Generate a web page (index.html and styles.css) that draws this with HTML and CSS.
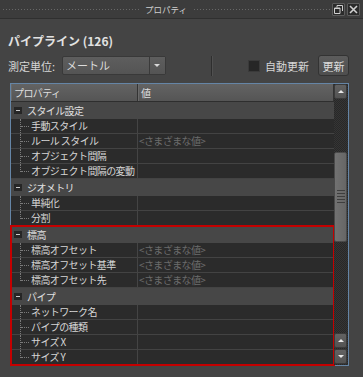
FILE: index.html
```html
<!DOCTYPE html>
<html lang="ja">
<head>
    <meta charset="UTF-8">
    <title>プロパティ</title>
    <link rel="stylesheet" href="styles.css">
</head>
<body>
    <div class="titlebar">
        <span class="grip"></span>
        <span class="title">プロパティ</span>
        <span class="grip"></span>
        <span class="tb-btn">
            <svg width="9" height="9" viewBox="0 0 9 9"><path d="M3 0.5h5.5v5.5M3 0.5v2M0.5 3h5.5v5.5h-5.5z M0.5 3.5h5.5" fill="none" stroke="#d0d0d0" stroke-width="1"/></svg>
        </span>
        <span class="tb-btn">
            <svg width="9" height="9" viewBox="0 0 9 9"><path d="M1 1L8 8M8 1L1 8" stroke="#d0d0d0" stroke-width="1.6"/></svg>
        </span>
    </div>

    <div class="panel">
        <h2 class="heading">パイプライン (126)</h2>

        <div class="toolbar">
            <span class="unit-label">測定単位:</span>
            <div class="select">
                <span class="select-value">メートル</span>
                <span class="select-arrow"></span>
            </div>
            <span class="divider"></span>
            <span class="checkbox"></span>
            <span class="check-label">自動更新</span>
            <button class="btn">更新</button>
        </div>

        <div class="grid">
            <div class="grid-body">
                <div class="grid-head">
                    <div class="cell">プロパティ</div>
                    <div class="cell">値</div>
                </div>

                <div class="row group"><span class="toggle"></span>スタイル設定</div>
                <div class="row"><div class="cell name"><span class="branch"></span>手動スタイル</div><div class="cell value"></div></div>
                <div class="row"><div class="cell name"><span class="branch"></span>ルール スタイル</div><div class="cell value">&lt;さまざまな値&gt;</div></div>
                <div class="row"><div class="cell name"><span class="branch"></span>オブジェクト間隔</div><div class="cell value"></div></div>
                <div class="row"><div class="cell name"><span class="branch last"></span>オブジェクト間隔の変動</div><div class="cell value"></div></div>

                <div class="row group"><span class="toggle"></span>ジオメトリ</div>
                <div class="row"><div class="cell name"><span class="branch"></span>単純化</div><div class="cell value"></div></div>
                <div class="row"><div class="cell name"><span class="branch last"></span>分割</div><div class="cell value"></div></div>

                <!-- 赤枠で囲まれた部分 -->
                <div class="highlight">
                    <div class="row group"><span class="toggle"></span>標高</div>
                    <div class="row"><div class="cell name"><span class="branch"></span>標高オフセット</div><div class="cell value">&lt;さまざまな値&gt;</div></div>
                    <div class="row"><div class="cell name"><span class="branch"></span>標高オフセット基準</div><div class="cell value">&lt;さまざまな値&gt;</div></div>
                    <div class="row"><div class="cell name"><span class="branch last"></span>標高オフセット先</div><div class="cell value">&lt;さまざまな値&gt;</div></div>

                    <div class="row group"><span class="toggle"></span>パイプ</div>
                    <div class="row"><div class="cell name"><span class="branch"></span>ネットワーク名</div><div class="cell value"></div></div>
                    <div class="row"><div class="cell name"><span class="branch"></span>パイプの種類</div><div class="cell value"></div></div>
                    <div class="row"><div class="cell name"><span class="branch"></span>サイズ X</div><div class="cell value"></div></div>
                    <div class="row"><div class="cell name"><span class="branch last"></span>サイズ Y</div><div class="cell value"></div></div>
                </div>
            </div>

            <div class="scrollbar">
                <span class="sb-btn up"></span>
                <span class="sb-track top"></span>
                <span class="sb-thumb"><span class="grip-dots"></span></span>
                <span class="sb-track rest"></span>
                <span class="sb-btn up"></span>
                <span class="sb-btn down"></span>
            </div>
        </div>
    </div>
</body>
</html>
```

FILE: styles.css
```css
body {
    margin: 0;
    width: 363px;
    height: 377px;
    background-color: #444;
    color: #d6d6d6;
    font-family: "Noto Sans CJK JP", "Noto Sans", sans-serif;
    overflow: hidden;
}
.titlebar {
    display: flex;
    align-items: center;
    height: 18px;
    padding: 0 3px 0 2px;
    background-color: #3c3c3c;
    border-bottom: 1px solid #2f2f2f;
}
.grip {
    flex: 1;
    height: 3px;
    background-image: radial-gradient(circle, #686868 0.7px, transparent 1px);
    background-size: 3px 3px;
}
.title {
    padding: 0 6px;
    font-size: 8.5px;
    line-height: 18px;
    color: #cfcfcf;
}
.tb-btn {
    display: flex;
    align-items: center;
    justify-content: center;
    width: 11px;
    height: 11px;
    margin-left: 2px;
    background-color: #2b2b2b;
    border: 1px solid #5c5c5c;
    border-radius: 1px;
}
.panel {
    padding: 14px 14px 0 8px;
}
.heading {
    margin: 0;
    font-size: 12px;
    font-weight: bold;
    line-height: 16px;
    color: #e2e2e2;
}
.toolbar {
    display: flex;
    align-items: center;
    height: 21px;
    margin-top: 6px;
    font-size: 11px;
}
.unit-label {
    width: 54px;
}
.select {
    display: flex;
    width: 102px;
    height: 17px;
    background: linear-gradient(#5e5e5e, #545454);
    border: 1px solid #393939;
    border-radius: 2px;
}
.select-value {
    flex: 1;
    padding-left: 3px;
    line-height: 17px;
    color: #dcdcdc;
}
.select-arrow {
    width: 15px;
    border-left: 1px solid #3a3a3a;
    background: linear-gradient(#5e5e5e, #545454);
    position: relative;
}
.select-arrow::after {
    content: "";
    position: absolute;
    left: 4px;
    top: 7px;
    border-left: 3px solid transparent;
    border-right: 3px solid transparent;
    border-top: 3px solid #d8d8d8;
}
.divider {
    width: 1px;
    height: 20px;
    margin: 0 35px 0 45px;
    background-color: #2e2e2e;
    border-right: 1px solid #505050;
}
.checkbox {
    width: 10px;
    height: 10px;
    background-color: #262626;
    border: 1px solid #3a3a3a;
}
.check-label {
    margin-left: 5px;
}
.btn {
    margin-left: auto;
    width: 31px;
    height: 21px;
    padding: 0;
    font-family: inherit;
    font-size: 11px;
    color: #dcdcdc;
    background: linear-gradient(#5c5c5c, #4e4e4e);
    border: 1px solid #333;
    border-radius: 3px;
}
.grid {
    display: flex;
    width: 337px;
    height: 281px;
    margin-top: 7px;
    margin-left: 2px;
    border: 1px solid #6585a6;
    background-color: #2c2c2c;
}
.grid-body {
    width: 323px;
    font-size: 10px;
    letter-spacing: -0.6px;
}
.grid-head {
    display: grid;
    grid-template-columns: 127px 1fr;
    height: 17px;
    background: linear-gradient(#636363, #555);
    border-bottom: 1px solid #2e2e2e;
    color: #dedede;
}
.grid-head .cell {
    padding-left: 2px;
    line-height: 17px;
    border-right: 1px solid #333;
    border-left: 1px solid #6a6a6a;
}
.row {
    display: grid;
    grid-template-columns: 127px 1fr;
    height: 14px;
    border-bottom: 1px solid #434343;
    background-color: #2b2b2b;
}
.row .cell {
    display: flex;
    align-items: center;
    line-height: 14px;
    white-space: nowrap;
    overflow: hidden;
}
.row .name {
    border-right: 1px solid #444;
}
.row .value {
    padding-left: 1px;
    color: #6c6c6c;
}
.row.group {
    display: flex;
    align-items: center;
    height: 17px;
    border-bottom: 0;
    background-color: #474747;
    color: #e0e0e0;
}
.toggle {
    position: relative;
    flex-shrink: 0;
    width: 8px;
    height: 7px;
    margin: 0 5px 0 3px;
    background-color: #262626;
}
.toggle::after {
    content: "";
    position: absolute;
    left: 2px;
    top: 3px;
    width: 4px;
    height: 1px;
    background-color: #c8c8c8;
}
.branch {
    position: relative;
    flex-shrink: 0;
    align-self: stretch;
    width: 9px;
    margin-left: 9px;
    margin-right: 1px;
    border-left: 1px dotted #7a7a7a;
}
.branch::after {
    content: "";
    position: absolute;
    left: 0;
    top: 7px;
    width: 8px;
    border-top: 1px dotted #7a7a7a;
}
.branch.last {
    align-self: flex-start;
    height: 8px;
}
.highlight {
    outline: 2px solid #c40000;
    outline-offset: -1px;
}
.scrollbar {
    display: flex;
    flex-direction: column;
    width: 14px;
    background-color: #2e2e2e;
    background-image: repeating-conic-gradient(#353535 0 25%, #282828 0 50%);
    background-size: 2px 2px;
}
.sb-btn {
    position: relative;
    height: 13px;
    margin: 0 1px 1px 0;
    background: linear-gradient(#626262, #535353);
    border: 1px solid #3a3a3a;
    border-radius: 2px;
}
.sb-btn::after {
    content: "";
    position: absolute;
    left: 3px;
    top: 5px;
    border-left: 3px solid transparent;
    border-right: 3px solid transparent;
}
.sb-btn.up::after {
    border-bottom: 3px solid #e8e8e8;
}
.sb-btn.down::after {
    border-top: 3px solid #e8e8e8;
}
.sb-track.top {
    height: 52px;
}
.sb-track.rest {
    flex: 1;
}
.sb-thumb {
    display: flex;
    align-items: center;
    justify-content: center;
    height: 88px;
    margin-right: 1px;
    background: linear-gradient(90deg, #727272, #666);
    border: 1px solid #4a4a4a;
    border-radius: 2px;
}
.grip-dots {
    width: 8px;
    height: 16px;
    background-image: radial-gradient(circle, #3e3e3e 0.8px, transparent 1px);
    background-size: 2px 3px;
}
```
